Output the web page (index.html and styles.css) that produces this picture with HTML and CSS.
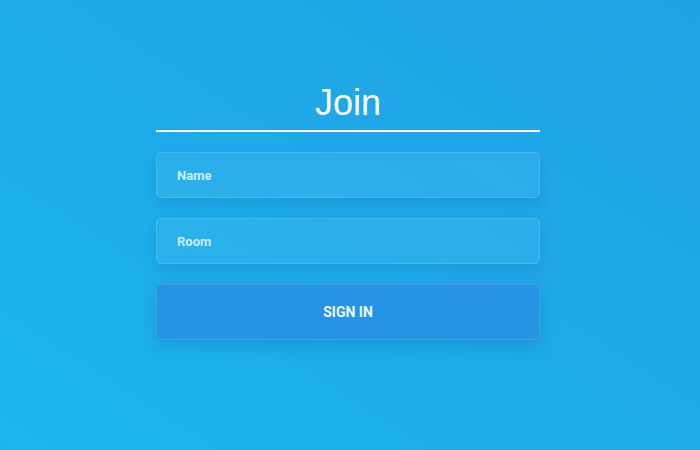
FILE: index.html
```html
<!DOCTYPE html>
<html>
<head>
<meta charset="utf-8">
<link rel="stylesheet" href="styles.css">
</head>
<body>
<main class="page">
  <form class="join">
    <h1 class="title">Join</h1>
    <div class="field"><span class="placeholder">Name</span></div>
    <div class="field"><span class="placeholder">Room</span></div>
    <button type="button" class="btn">SIGN IN</button>
  </form>
</main>
</body>
</html>
```
FILE: styles.css
```css
html, body {
  margin: 0;
  padding: 0;
  height: 100%;
}
body {
  background: linear-gradient(to top right, #1bb5ec 0%, #1fa8e8 60%, #20a3e6 100%);
  font-family: Roboto, "Liberation Sans", Arial, sans-serif;
}
.page {
  height: 450px;
  display: flex;
  justify-content: center;
  padding-right: 4px;
}
.join {
  width: 384px;
  margin-top: 80px;
  display: flex;
  flex-direction: column;
}
.title {
  margin: 0;
  font-family: "Liberation Sans", Arial, sans-serif;
  font-weight: normal;
  font-size: 36px;
  line-height: 46px;
  color: #ffffff;
  text-align: center;
  border-bottom: 2px solid #ffffff;
  padding-bottom: 4px;
  margin-bottom: 20px;
}
.field {
  height: 44px;
  border: 1px solid rgba(255, 255, 255, 0.12);
  border-radius: 5px;
  background: rgba(255, 255, 255, 0.06);
  box-shadow: 0 6px 14px rgba(0, 60, 120, 0.14);
  display: flex;
  align-items: center;
  padding-left: 20px;
  margin-bottom: 20px;
}
.placeholder {
  font-size: 13px;
  font-weight: bold;
  color: #cdeefc;
}
.btn {
  height: 56px;
  border: 1px solid rgba(255, 255, 255, 0.12);
  border-radius: 5px;
  background: #2693e4;
  box-shadow: 0 6px 16px rgba(0, 60, 120, 0.18);
  font-family: Roboto, "Liberation Sans", Arial, sans-serif;
  font-size: 14px;
  font-weight: bold;
  color: #f0f9ff;
  cursor: pointer;
}
```
